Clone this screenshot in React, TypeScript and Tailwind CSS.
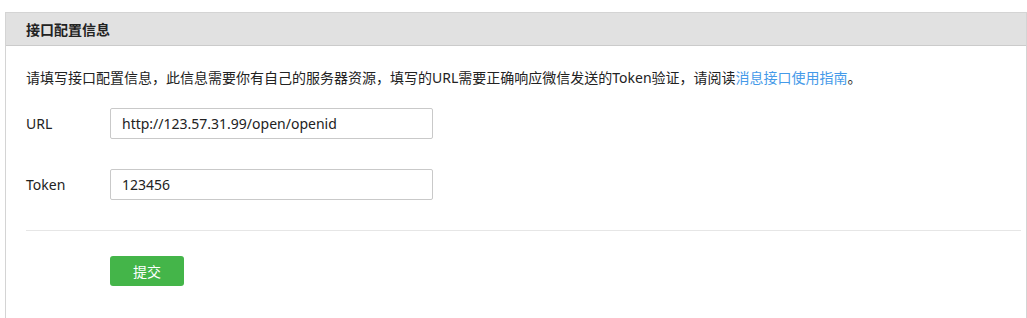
export default function App() {
  return (
    <div className="min-h-[318px] bg-white pt-[12px] pl-[5px] font-['Noto_Sans','Noto_Sans_CJK_SC',sans-serif] text-[14px] text-[#222]">
      <div className="border-x border-t border-[#d4d4d4] min-h-[306px]">
        <div className="flex h-[33px] items-center border-b border-[#cbcbcb] bg-[#e1e1e1] pl-[20px] font-bold">
          接口配置信息
        </div>
        <div className="pl-[20px] pr-[5px] pt-[22px]">
          <p className="leading-[20px]">
            请填写接口配置信息，此信息需要你有自己的服务器资源，填写的URL需要正确响应微信发送的Token验证，请阅读
            <a className="text-[#459ae9]">消息接口使用指南</a>。
          </p>
          <div className="mt-[20px] flex items-center">
            <label className="w-[84px]">URL</label>
            <input
              className="h-[31px] w-[323px] rounded-[2px] border border-[#c9c9c9] px-[11px] text-[14px] text-[#222] outline-none"
              defaultValue="http://123.57.31.99/open/openid"
            />
          </div>
          <div className="mt-[30px] flex items-center">
            <label className="w-[84px]">Token</label>
            <input
              className="h-[31px] w-[323px] rounded-[2px] border border-[#c9c9c9] px-[11px] text-[14px] text-[#222] outline-none"
              defaultValue="123456"
            />
          </div>
          <div className="mt-[30px] h-px bg-[#e6e6e6]" />
          <div className="mt-[25px] pl-[84px]">
            <button className="h-[30px] w-[74px] rounded-[3px] bg-[#44b549] text-[14px] text-white">
              提交
            </button>
          </div>
        </div>
      </div>
    </div>
  );
}
